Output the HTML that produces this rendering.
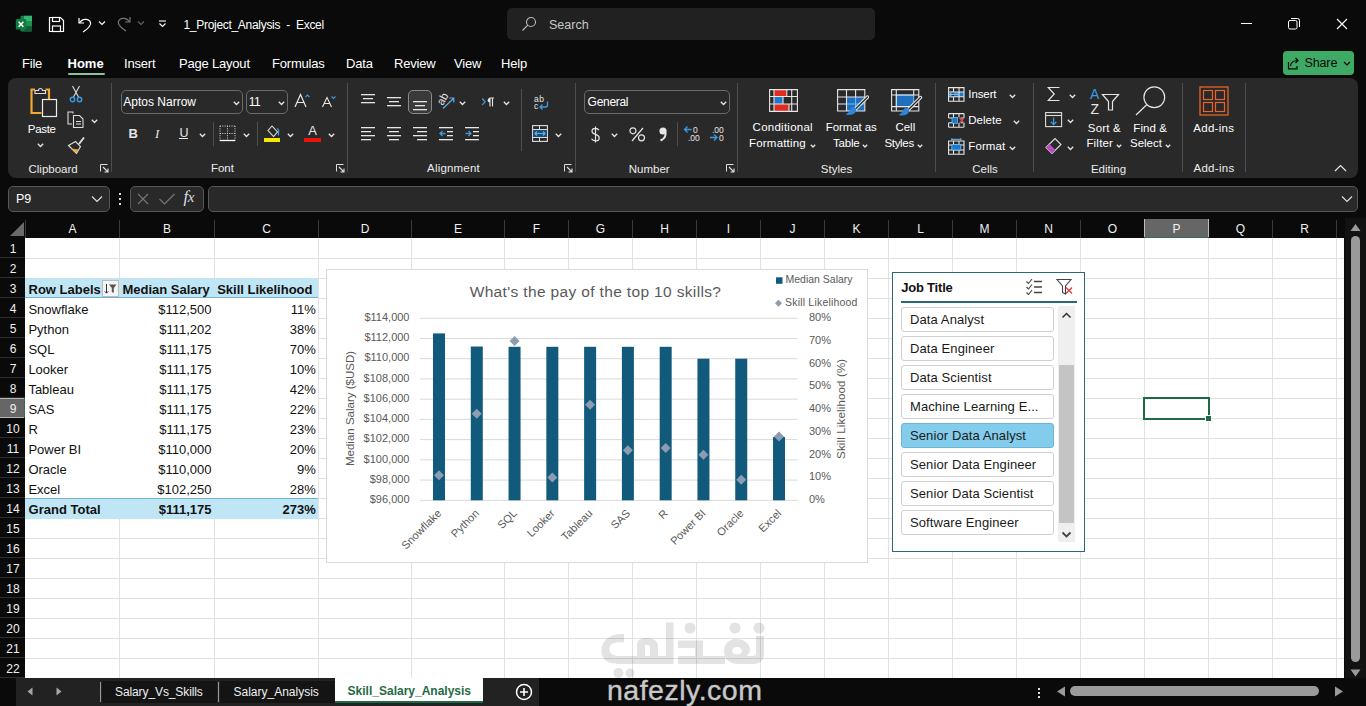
<!DOCTYPE html>
<html><head><meta charset="utf-8"><style>
*{margin:0;padding:0;box-sizing:border-box}
html,body{width:1366px;height:706px;overflow:hidden;background:#0a0a0a;font-family:"Liberation Sans", sans-serif}
.t{position:absolute;white-space:nowrap;line-height:1}
.r{position:absolute}
</style></head><body>
<svg class="r" style="left:15px;top:15px;" width="19" height="18" viewBox="0 0 19 18"><rect x="5.5" y="0.8" width="11.5" height="15.7" rx="1.2" fill="#1b7a47"/><rect x="9" y="0.8" width="8" height="5.2" fill="#35b774"/><rect x="9" y="6" width="8" height="5.2" fill="#21924f"/><rect x="9" y="11.2" width="8" height="5.3" fill="#145c36"/><rect x="0.8" y="4" width="10.5" height="10.5" rx="1.2" fill="#107c41"/><path d="M3.6 6.8l4.8 5M8.4 6.8l-4.8 5" stroke="#fff" stroke-width="1.5"/></svg><svg class="r" style="left:48px;top:16px;" width="17" height="17" viewBox="0 0 17 17"><path d="M1.5 1.5h11l3 3v11h-14z" fill="none" stroke="#fff" stroke-width="1.2"/><rect x="4.5" y="1.5" width="7" height="4" fill="none" stroke="#fff" stroke-width="1.2"/><rect x="4.5" y="10" width="8" height="5.5" fill="none" stroke="#fff" stroke-width="1.2"/></svg><svg class="r" style="left:77px;top:16px;" width="16" height="17" viewBox="0 0 16 17"><path d="M2 2v5h5" fill="none" stroke="#fff" stroke-width="1.2"/><path d="M2.5 7 C5 2.5 12 2 13.5 6.5 C14.5 9.5 12 12 6 16" fill="none" stroke="#fff" stroke-width="1.2"/></svg><svg class="r" style="left:98px;top:20px;" width="8" height="6" viewBox="0 0 8 6"><path d="M1 1.5l3 3 3-3" fill="none" stroke="#fff" stroke-width="1.1"/></svg><svg class="r" style="left:117px;top:15px;" width="15" height="17" viewBox="0 0 15 17"><path d="M13 2v5h-5" fill="none" stroke="#777" stroke-width="1.2"/><path d="M12.5 7 C10 2.5 3 2 1.5 6.5 C0.5 9.5 3 12 9 16" fill="none" stroke="#777" stroke-width="1.2"/></svg><svg class="r" style="left:137px;top:20px;" width="8" height="6" viewBox="0 0 8 6"><path d="M1 1.5l3 3 3-3" fill="none" stroke="#666" stroke-width="1.1"/></svg><svg class="r" style="left:158px;top:20px;" width="9" height="8" viewBox="0 0 9 8"><path d="M1 1h7" stroke="#fff" stroke-width="1.1"/><path d="M1.5 3.5l3 3 3-3" fill="none" stroke="#fff" stroke-width="1.1"/></svg><div class="t " style="left:183.5px;top:18.99px;font-size:12px;color:#fff;font-weight:normal;letter-spacing:-0.3px">1_Project_Analysis&nbsp;&nbsp;-&nbsp;&nbsp;Excel</div><div class="r" style="left:507px;top:8px;width:368px;height:32px;background:#212121;border-radius:5px"></div><svg class="r" style="left:521px;top:16px;" width="16" height="16" viewBox="0 0 16 16"><circle cx="10" cy="6" r="4.5" fill="none" stroke="#bbb" stroke-width="1.1"/><path d="M6.8 9.2L1.5 14.5" stroke="#bbb" stroke-width="1.2"/></svg><div class="t " style="left:549px;top:18.53px;font-size:12.5px;color:#c8c8c8;font-weight:normal;">Search</div><div class="r" style="left:1241px;top:23px;width:11px;height:1px;background:#fff;"></div><svg class="r" style="left:1288px;top:18px;" width="12" height="12" viewBox="0 0 12 12"><rect x="0.5" y="2.5" width="8.5" height="8.5" rx="1.5" fill="none" stroke="#fff" stroke-width="1"/><path d="M3 0.5h6.5a2 2 0 0 1 2 2v6.5" fill="none" stroke="#fff" stroke-width="1"/></svg><svg class="r" style="left:1336px;top:18px;" width="12" height="12" viewBox="0 0 12 12"><path d="M1 1l10 10M11 1l-10 10" stroke="#fff" stroke-width="1.1"/></svg><div class="t " style="left:22px;top:57.47px;font-size:13px;color:#fff;font-weight:normal;letter-spacing:-0.2px">File</div><div class="t " style="left:124px;top:57.47px;font-size:13px;color:#fff;font-weight:normal;letter-spacing:-0.2px">Insert</div><div class="t " style="left:179px;top:57.47px;font-size:13px;color:#fff;font-weight:normal;letter-spacing:-0.2px">Page Layout</div><div class="t " style="left:272px;top:57.47px;font-size:13px;color:#fff;font-weight:normal;letter-spacing:-0.2px">Formulas</div><div class="t " style="left:346px;top:57.47px;font-size:13px;color:#fff;font-weight:normal;letter-spacing:-0.2px">Data</div><div class="t " style="left:394px;top:57.47px;font-size:13px;color:#fff;font-weight:normal;letter-spacing:-0.2px">Review</div><div class="t " style="left:454px;top:57.47px;font-size:13px;color:#fff;font-weight:normal;letter-spacing:-0.2px">View</div><div class="t " style="left:501px;top:57.47px;font-size:13px;color:#fff;font-weight:normal;letter-spacing:-0.2px">Help</div><div class="t " style="left:67.5px;top:57.47px;font-size:13px;color:#fff;font-weight:bold;letter-spacing:0px">Home</div><div class="r" style="left:67.5px;top:73px;width:37px;height:2.2px;background:#8cc39c;border-radius:1px"></div><div class="r" style="left:1283px;top:51px;width:71px;height:24px;background:#3faa65;border-radius:4px"></div><svg class="r" style="left:1287px;top:57px;" width="14" height="13" viewBox="0 0 14 13"><path d="M1.5 5v6.8h8.5V9" fill="none" stroke="#0a0a0a" stroke-width="1.2"/><path d="M3.5 9C4 5.5 6.5 3.5 10.5 3.5M8.5 1l2.5 2.5-2.5 2.5" fill="none" stroke="#0a0a0a" stroke-width="1.2"/></svg><div class="t " style="left:1304.4px;top:57.23px;font-size:12.5px;color:#0a0a0a;font-weight:normal;letter-spacing:-0.1px">Share</div><svg class="r" style="left:1343px;top:61px;" width="8" height="6" viewBox="0 0 8 6"><path d="M1 1l3 3 3-3" fill="none" stroke="#0a0a0a" stroke-width="1.2"/></svg><div class="r" style="left:8px;top:78px;width:1350px;height:100px;background:#292929;border-radius:8px"></div><div class="r" style="left:8px;top:186px;width:102px;height:26px;background:#292929;border:1px solid #575757;border-radius:5px"></div><div class="t " style="left:16px;top:192.53px;font-size:12.5px;color:#fff;font-weight:normal;">P9</div><svg class="r" style="left:91px;top:195px;" width="12" height="8" viewBox="0 0 12 8"><path d="M1 1.5l5 5 5-5" fill="none" stroke="#ddd" stroke-width="1.2"/></svg><div class="r" style="left:119px;top:193px;width:2px;height:2px;background:#ddd;"></div><div class="r" style="left:119px;top:198px;width:2px;height:2px;background:#ddd;"></div><div class="r" style="left:119px;top:203px;width:2px;height:2px;background:#ddd;"></div><div class="r" style="left:130px;top:186px;width:74px;height:26px;background:#292929;border:1px solid #575757;border-radius:5px"></div><svg class="r" style="left:136px;top:192px;" width="14" height="14" viewBox="0 0 14 14"><path d="M2 2l10 10M12 2l-10 10" stroke="#777" stroke-width="1.1"/></svg><svg class="r" style="left:158px;top:192px;" width="18" height="14" viewBox="0 0 18 14"><path d="M1.5 7l5 5 10-10" fill="none" stroke="#777" stroke-width="1.1"/></svg><div class="t " style="left:183.5px;top:187.50px;font-size:17px;color:#ddd;font-weight:normal;font-family:&quot;Liberation Serif&quot;,serif;letter-spacing:-0.5px"><i>f</i><i style="font-size:15px">x</i></div><div class="r" style="left:208px;top:186px;width:1150px;height:26px;background:#292929;border:1px solid #575757;border-radius:5px"></div><svg class="r" style="left:1341px;top:195px;" width="12" height="8" viewBox="0 0 12 8"><path d="M1 1.5l5 5 5-5" fill="none" stroke="#ddd" stroke-width="1.2"/></svg><div class="r" style="left:25px;top:238px;width:1319px;height:440px;background:#ffffff;"></div><div class="r" style="left:119px;top:238px;width:1px;height:440px;background:#e1e1e1;"></div><div class="r" style="left:214px;top:238px;width:1px;height:440px;background:#e1e1e1;"></div><div class="r" style="left:318px;top:238px;width:1px;height:440px;background:#e1e1e1;"></div><div class="r" style="left:411px;top:238px;width:1px;height:440px;background:#e1e1e1;"></div><div class="r" style="left:504px;top:238px;width:1px;height:440px;background:#e1e1e1;"></div><div class="r" style="left:568px;top:238px;width:1px;height:440px;background:#e1e1e1;"></div><div class="r" style="left:632px;top:238px;width:1px;height:440px;background:#e1e1e1;"></div><div class="r" style="left:696px;top:238px;width:1px;height:440px;background:#e1e1e1;"></div><div class="r" style="left:760px;top:238px;width:1px;height:440px;background:#e1e1e1;"></div><div class="r" style="left:824px;top:238px;width:1px;height:440px;background:#e1e1e1;"></div><div class="r" style="left:888px;top:238px;width:1px;height:440px;background:#e1e1e1;"></div><div class="r" style="left:952px;top:238px;width:1px;height:440px;background:#e1e1e1;"></div><div class="r" style="left:1016px;top:238px;width:1px;height:440px;background:#e1e1e1;"></div><div class="r" style="left:1080px;top:238px;width:1px;height:440px;background:#e1e1e1;"></div><div class="r" style="left:1144px;top:238px;width:1px;height:440px;background:#e1e1e1;"></div><div class="r" style="left:1208px;top:238px;width:1px;height:440px;background:#e1e1e1;"></div><div class="r" style="left:1272px;top:238px;width:1px;height:440px;background:#e1e1e1;"></div><div class="r" style="left:1336px;top:238px;width:1px;height:440px;background:#e1e1e1;"></div><div class="r" style="left:25px;top:258px;width:1319px;height:1px;background:#e1e1e1;"></div><div class="r" style="left:25px;top:278px;width:1319px;height:1px;background:#e1e1e1;"></div><div class="r" style="left:25px;top:298px;width:1319px;height:1px;background:#e1e1e1;"></div><div class="r" style="left:25px;top:318px;width:1319px;height:1px;background:#e1e1e1;"></div><div class="r" style="left:25px;top:338px;width:1319px;height:1px;background:#e1e1e1;"></div><div class="r" style="left:25px;top:358px;width:1319px;height:1px;background:#e1e1e1;"></div><div class="r" style="left:25px;top:378px;width:1319px;height:1px;background:#e1e1e1;"></div><div class="r" style="left:25px;top:398px;width:1319px;height:1px;background:#e1e1e1;"></div><div class="r" style="left:25px;top:418px;width:1319px;height:1px;background:#e1e1e1;"></div><div class="r" style="left:25px;top:438px;width:1319px;height:1px;background:#e1e1e1;"></div><div class="r" style="left:25px;top:458px;width:1319px;height:1px;background:#e1e1e1;"></div><div class="r" style="left:25px;top:478px;width:1319px;height:1px;background:#e1e1e1;"></div><div class="r" style="left:25px;top:498px;width:1319px;height:1px;background:#e1e1e1;"></div><div class="r" style="left:25px;top:518px;width:1319px;height:1px;background:#e1e1e1;"></div><div class="r" style="left:25px;top:538px;width:1319px;height:1px;background:#e1e1e1;"></div><div class="r" style="left:25px;top:558px;width:1319px;height:1px;background:#e1e1e1;"></div><div class="r" style="left:25px;top:578px;width:1319px;height:1px;background:#e1e1e1;"></div><div class="r" style="left:25px;top:598px;width:1319px;height:1px;background:#e1e1e1;"></div><div class="r" style="left:25px;top:618px;width:1319px;height:1px;background:#e1e1e1;"></div><div class="r" style="left:25px;top:638px;width:1319px;height:1px;background:#e1e1e1;"></div><div class="r" style="left:25px;top:658px;width:1319px;height:1px;background:#e1e1e1;"></div><div class="r" style="left:25px;top:678px;width:1319px;height:1px;background:#e1e1e1;"></div><div class="r" style="left:0px;top:218px;width:1345px;height:20px;background:#0a0a0a;"></div><div class="r" style="left:1144px;top:219px;width:64px;height:19px;background:#666666;"></div><div class="r" style="left:1144px;top:236.5px;width:64px;height:1.5px;background:#2f7050;"></div><div class="r" style="left:119px;top:220px;width:1px;height:18px;background:#3a3a3a;"></div><div class="t " style="left:72.5px;transform:translateX(-50%);top:222.99px;font-size:12px;color:#f0f0f0;font-weight:normal;">A</div><div class="r" style="left:214px;top:220px;width:1px;height:18px;background:#3a3a3a;"></div><div class="t " style="left:167.0px;transform:translateX(-50%);top:222.99px;font-size:12px;color:#f0f0f0;font-weight:normal;">B</div><div class="r" style="left:318px;top:220px;width:1px;height:18px;background:#3a3a3a;"></div><div class="t " style="left:266.5px;transform:translateX(-50%);top:222.99px;font-size:12px;color:#f0f0f0;font-weight:normal;">C</div><div class="r" style="left:411px;top:220px;width:1px;height:18px;background:#3a3a3a;"></div><div class="t " style="left:365.0px;transform:translateX(-50%);top:222.99px;font-size:12px;color:#f0f0f0;font-weight:normal;">D</div><div class="r" style="left:504px;top:220px;width:1px;height:18px;background:#3a3a3a;"></div><div class="t " style="left:458.0px;transform:translateX(-50%);top:222.99px;font-size:12px;color:#f0f0f0;font-weight:normal;">E</div><div class="r" style="left:568px;top:220px;width:1px;height:18px;background:#3a3a3a;"></div><div class="t " style="left:536.5px;transform:translateX(-50%);top:222.99px;font-size:12px;color:#f0f0f0;font-weight:normal;">F</div><div class="r" style="left:632px;top:220px;width:1px;height:18px;background:#3a3a3a;"></div><div class="t " style="left:600.5px;transform:translateX(-50%);top:222.99px;font-size:12px;color:#f0f0f0;font-weight:normal;">G</div><div class="r" style="left:696px;top:220px;width:1px;height:18px;background:#3a3a3a;"></div><div class="t " style="left:664.5px;transform:translateX(-50%);top:222.99px;font-size:12px;color:#f0f0f0;font-weight:normal;">H</div><div class="r" style="left:760px;top:220px;width:1px;height:18px;background:#3a3a3a;"></div><div class="t " style="left:728.5px;transform:translateX(-50%);top:222.99px;font-size:12px;color:#f0f0f0;font-weight:normal;">I</div><div class="r" style="left:824px;top:220px;width:1px;height:18px;background:#3a3a3a;"></div><div class="t " style="left:792.5px;transform:translateX(-50%);top:222.99px;font-size:12px;color:#f0f0f0;font-weight:normal;">J</div><div class="r" style="left:888px;top:220px;width:1px;height:18px;background:#3a3a3a;"></div><div class="t " style="left:856.5px;transform:translateX(-50%);top:222.99px;font-size:12px;color:#f0f0f0;font-weight:normal;">K</div><div class="r" style="left:952px;top:220px;width:1px;height:18px;background:#3a3a3a;"></div><div class="t " style="left:920.5px;transform:translateX(-50%);top:222.99px;font-size:12px;color:#f0f0f0;font-weight:normal;">L</div><div class="r" style="left:1016px;top:220px;width:1px;height:18px;background:#3a3a3a;"></div><div class="t " style="left:984.5px;transform:translateX(-50%);top:222.99px;font-size:12px;color:#f0f0f0;font-weight:normal;">M</div><div class="r" style="left:1080px;top:220px;width:1px;height:18px;background:#3a3a3a;"></div><div class="t " style="left:1048.5px;transform:translateX(-50%);top:222.99px;font-size:12px;color:#f0f0f0;font-weight:normal;">N</div><div class="r" style="left:1144px;top:220px;width:1px;height:18px;background:#3a3a3a;"></div><div class="t " style="left:1112.5px;transform:translateX(-50%);top:222.99px;font-size:12px;color:#f0f0f0;font-weight:normal;">O</div><div class="r" style="left:1208px;top:220px;width:1px;height:18px;background:#3a3a3a;"></div><div class="t " style="left:1176.5px;transform:translateX(-50%);top:222.99px;font-size:12px;color:#f0f0f0;font-weight:normal;">P</div><div class="r" style="left:1272px;top:220px;width:1px;height:18px;background:#3a3a3a;"></div><div class="t " style="left:1240.5px;transform:translateX(-50%);top:222.99px;font-size:12px;color:#f0f0f0;font-weight:normal;">Q</div><div class="r" style="left:1336px;top:220px;width:1px;height:18px;background:#3a3a3a;"></div><div class="t " style="left:1304.5px;transform:translateX(-50%);top:222.99px;font-size:12px;color:#f0f0f0;font-weight:normal;">R</div><div class="r" style="left:25px;top:220px;width:1px;height:18px;background:#3a3a3a;"></div><div class="r" style="left:1144px;top:219px;width:1px;height:18px;background:#bdbdbd;"></div><div class="r" style="left:1208px;top:219px;width:1px;height:18px;background:#bdbdbd;"></div><svg class="r" style="left:8px;top:221px;" width="17" height="16" viewBox="0 0 17 16"><path d="M16 1V15H2z" fill="#6a6a6a"/></svg><div class="r" style="left:0px;top:238px;width:25px;height:440px;background:#0a0a0a;"></div><div class="r" style="left:0px;top:398px;width:25px;height:20px;background:#666666;"></div><div class="r" style="left:24px;top:398px;width:1.5px;height:20px;background:#2f7050;"></div><div class="r" style="left:0px;top:257px;width:25px;height:1px;background:#2e2e2e;"></div><div class="t " style="left:13px;transform:translateX(-50%);top:242.59px;font-size:12px;color:#f0f0f0;font-weight:normal;">1</div><div class="r" style="left:0px;top:277px;width:25px;height:1px;background:#2e2e2e;"></div><div class="t " style="left:13px;transform:translateX(-50%);top:262.59px;font-size:12px;color:#f0f0f0;font-weight:normal;">2</div><div class="r" style="left:0px;top:297px;width:25px;height:1px;background:#2e2e2e;"></div><div class="t " style="left:13px;transform:translateX(-50%);top:282.59px;font-size:12px;color:#f0f0f0;font-weight:normal;">3</div><div class="r" style="left:0px;top:317px;width:25px;height:1px;background:#2e2e2e;"></div><div class="t " style="left:13px;transform:translateX(-50%);top:302.59px;font-size:12px;color:#f0f0f0;font-weight:normal;">4</div><div class="r" style="left:0px;top:337px;width:25px;height:1px;background:#2e2e2e;"></div><div class="t " style="left:13px;transform:translateX(-50%);top:322.59px;font-size:12px;color:#f0f0f0;font-weight:normal;">5</div><div class="r" style="left:0px;top:357px;width:25px;height:1px;background:#2e2e2e;"></div><div class="t " style="left:13px;transform:translateX(-50%);top:342.59px;font-size:12px;color:#f0f0f0;font-weight:normal;">6</div><div class="r" style="left:0px;top:377px;width:25px;height:1px;background:#2e2e2e;"></div><div class="t " style="left:13px;transform:translateX(-50%);top:362.59px;font-size:12px;color:#f0f0f0;font-weight:normal;">7</div><div class="r" style="left:0px;top:397px;width:25px;height:1px;background:#2e2e2e;"></div><div class="t " style="left:13px;transform:translateX(-50%);top:382.59px;font-size:12px;color:#f0f0f0;font-weight:normal;">8</div><div class="r" style="left:0px;top:417px;width:25px;height:1px;background:#2e2e2e;"></div><div class="t " style="left:13px;transform:translateX(-50%);top:402.59px;font-size:12px;color:#f0f0f0;font-weight:normal;">9</div><div class="r" style="left:0px;top:437px;width:25px;height:1px;background:#2e2e2e;"></div><div class="t " style="left:13px;transform:translateX(-50%);top:422.59px;font-size:12px;color:#f0f0f0;font-weight:normal;">10</div><div class="r" style="left:0px;top:457px;width:25px;height:1px;background:#2e2e2e;"></div><div class="t " style="left:13px;transform:translateX(-50%);top:442.59px;font-size:12px;color:#f0f0f0;font-weight:normal;">11</div><div class="r" style="left:0px;top:477px;width:25px;height:1px;background:#2e2e2e;"></div><div class="t " style="left:13px;transform:translateX(-50%);top:462.59px;font-size:12px;color:#f0f0f0;font-weight:normal;">12</div><div class="r" style="left:0px;top:497px;width:25px;height:1px;background:#2e2e2e;"></div><div class="t " style="left:13px;transform:translateX(-50%);top:482.59px;font-size:12px;color:#f0f0f0;font-weight:normal;">13</div><div class="r" style="left:0px;top:517px;width:25px;height:1px;background:#2e2e2e;"></div><div class="t " style="left:13px;transform:translateX(-50%);top:502.59px;font-size:12px;color:#f0f0f0;font-weight:normal;">14</div><div class="r" style="left:0px;top:537px;width:25px;height:1px;background:#2e2e2e;"></div><div class="t " style="left:13px;transform:translateX(-50%);top:522.59px;font-size:12px;color:#f0f0f0;font-weight:normal;">15</div><div class="r" style="left:0px;top:557px;width:25px;height:1px;background:#2e2e2e;"></div><div class="t " style="left:13px;transform:translateX(-50%);top:542.59px;font-size:12px;color:#f0f0f0;font-weight:normal;">16</div><div class="r" style="left:0px;top:577px;width:25px;height:1px;background:#2e2e2e;"></div><div class="t " style="left:13px;transform:translateX(-50%);top:562.59px;font-size:12px;color:#f0f0f0;font-weight:normal;">17</div><div class="r" style="left:0px;top:597px;width:25px;height:1px;background:#2e2e2e;"></div><div class="t " style="left:13px;transform:translateX(-50%);top:582.59px;font-size:12px;color:#f0f0f0;font-weight:normal;">18</div><div class="r" style="left:0px;top:617px;width:25px;height:1px;background:#2e2e2e;"></div><div class="t " style="left:13px;transform:translateX(-50%);top:602.59px;font-size:12px;color:#f0f0f0;font-weight:normal;">19</div><div class="r" style="left:0px;top:637px;width:25px;height:1px;background:#2e2e2e;"></div><div class="t " style="left:13px;transform:translateX(-50%);top:622.59px;font-size:12px;color:#f0f0f0;font-weight:normal;">20</div><div class="r" style="left:0px;top:657px;width:25px;height:1px;background:#2e2e2e;"></div><div class="t " style="left:13px;transform:translateX(-50%);top:642.59px;font-size:12px;color:#f0f0f0;font-weight:normal;">21</div><div class="r" style="left:0px;top:677px;width:25px;height:1px;background:#2e2e2e;"></div><div class="t " style="left:13px;transform:translateX(-50%);top:662.59px;font-size:12px;color:#f0f0f0;font-weight:normal;">22</div><div class="r" style="left:0px;top:398px;width:24px;height:1px;background:#b5b5b5;"></div><div class="r" style="left:0px;top:417px;width:24px;height:1px;background:#b5b5b5;"></div><div class="r" style="left:1143px;top:397px;width:67px;height:23px;border:2px solid #1e6b43"></div><div class="r" style="left:1206px;top:416px;width:5px;height:5px;background:#1e6b43;outline:1px solid #fff"></div><div class="r" style="left:1345px;top:218px;width:21px;height:460px;background:#121212;"></div><svg class="r" style="left:1350px;top:223px;" width="11" height="9" viewBox="0 0 11 9"><path d="M5.5 1L10.5 8H0.5z" fill="#9a9a9a"/></svg><div class="r" style="left:1351px;top:236px;width:9px;height:426px;background:#9a9a9a;border-radius:5px"></div><svg class="r" style="left:1350px;top:669px;" width="11" height="8" viewBox="0 0 11 8"><path d="M0.5 0.5H10.5L5.5 7.5z" fill="#9a9a9a"/></svg><div class="r" style="left:0px;top:678px;width:1366px;height:28px;background:#0a0a0a;"></div><div class="r" style="left:16px;top:678px;width:523px;height:28px;background:#222222;"></div><svg class="r" style="left:27px;top:687px;" width="7" height="10" viewBox="0 0 7 10"><path d="M5.5 0.5L0.5 4.5l5 4z" fill="#a5a5a5"/></svg><svg class="r" style="left:55.5px;top:687px;" width="7" height="10" viewBox="0 0 7 10"><path d="M0.5 0.5l5 4-5 4z" fill="#a5a5a5"/></svg><div class="r" style="left:100px;top:682px;width:1px;height:20px;background:#9a9a9a;"></div><div class="r" style="left:102px;top:681px;width:115px;height:22px;background:#141414;"></div><div class="t " style="left:115px;top:685.99px;font-size:12px;color:#f0f0f0;font-weight:normal;letter-spacing:-0.1px">Salary_Vs_Skills</div><div class="r" style="left:218px;top:682px;width:1px;height:20px;background:#9a9a9a;"></div><div class="r" style="left:220px;top:681px;width:115px;height:22px;background:#141414;"></div><div class="t " style="left:233.5px;top:685.99px;font-size:12px;color:#f0f0f0;font-weight:normal;letter-spacing:0px">Salary_Analysis</div><div class="r" style="left:335px;top:678px;width:148px;height:25px;background:#ffffff;"></div><div class="r" style="left:335px;top:701px;width:148px;height:2px;background:#1e6b43;"></div><div class="t " style="left:347.6px;top:684.89px;font-size:12px;color:#1e6b43;font-weight:bold;letter-spacing:0px">Skill_Salary_Analysis</div><svg class="r" style="left:515px;top:683px;" width="18" height="18" viewBox="0 0 18 18"><circle cx="9" cy="9" r="7.5" fill="none" stroke="#fff" stroke-width="1.5"/><path d="M9 5v8M5 9h8" stroke="#fff" stroke-width="1.6"/></svg><div class="r" style="left:1038px;top:688px;width:2px;height:2px;background:#ddd;"></div><div class="r" style="left:1038px;top:692px;width:2px;height:2px;background:#ddd;"></div><div class="r" style="left:1038px;top:696px;width:2px;height:2px;background:#ddd;"></div><svg class="r" style="left:1056px;top:686px;" width="10" height="11" viewBox="0 0 10 11"><path d="M9 0.5V10.5L1 5.5z" fill="#9a9a9a"/></svg><div class="r" style="left:1070px;top:686px;width:249px;height:10px;background:#9a9a9a;border-radius:5px"></div><svg class="r" style="left:1334px;top:686px;" width="10" height="11" viewBox="0 0 10 11"><path d="M1 0.5V10.5L9 5.5z" fill="#9a9a9a"/></svg><div class="r" style="left:25px;top:278px;width:293px;height:240px;background:#ffffff;"></div><div class="r" style="left:25px;top:278px;width:293px;height:20px;background:#c0e6f5;"></div><div class="r" style="left:25px;top:297px;width:293px;height:1px;background:#6fb3d9;"></div><div class="r" style="left:25px;top:498px;width:293px;height:21px;background:#c0e6f5;"></div><div class="r" style="left:25px;top:498px;width:293px;height:1px;background:#6fb3d9;"></div><div class="t " style="left:28.5px;top:282.87px;font-size:13px;color:#111111;font-weight:bold;">Row Labels</div><div class="r" style="left:102px;top:280px;width:17px;height:17px;background:#f4f4f4;border:1px solid #bcbcbc"></div><svg class="r" style="left:103px;top:281px;" width="15" height="15" viewBox="0 0 15 15"><path d="M3.5 3v9M1.8 10.3l1.7 1.9 1.7-1.9" fill="none" stroke="#333" stroke-width="1"/><path d="M6 3.5h7.5l-2.7 3.6v5l-2-1v-4z" fill="#555"/></svg><div class="t " style="left:122.4px;top:282.87px;font-size:13px;color:#111111;font-weight:bold;">Median Salary</div><div class="t " style="right:1053.5px;top:282.87px;font-size:13px;color:#111111;font-weight:bold;">Skill Likelihood</div><div class="t " style="left:28.4px;top:302.77px;font-size:13px;color:#111111;font-weight:normal;">Snowflake</div><div class="t " style="right:1154.5px;top:302.77px;font-size:13px;color:#111111;font-weight:normal;">$112,500</div><div class="t " style="right:1050.2px;top:302.77px;font-size:13px;color:#111111;font-weight:normal;">11%</div><div class="t " style="left:28.4px;top:322.77px;font-size:13px;color:#111111;font-weight:normal;">Python</div><div class="t " style="right:1154.5px;top:322.77px;font-size:13px;color:#111111;font-weight:normal;">$111,202</div><div class="t " style="right:1050.2px;top:322.77px;font-size:13px;color:#111111;font-weight:normal;">38%</div><div class="t " style="left:28.4px;top:342.77px;font-size:13px;color:#111111;font-weight:normal;">SQL</div><div class="t " style="right:1154.5px;top:342.77px;font-size:13px;color:#111111;font-weight:normal;">$111,175</div><div class="t " style="right:1050.2px;top:342.77px;font-size:13px;color:#111111;font-weight:normal;">70%</div><div class="t " style="left:28.4px;top:362.77px;font-size:13px;color:#111111;font-weight:normal;">Looker</div><div class="t " style="right:1154.5px;top:362.77px;font-size:13px;color:#111111;font-weight:normal;">$111,175</div><div class="t " style="right:1050.2px;top:362.77px;font-size:13px;color:#111111;font-weight:normal;">10%</div><div class="t " style="left:28.4px;top:382.77px;font-size:13px;color:#111111;font-weight:normal;">Tableau</div><div class="t " style="right:1154.5px;top:382.77px;font-size:13px;color:#111111;font-weight:normal;">$111,175</div><div class="t " style="right:1050.2px;top:382.77px;font-size:13px;color:#111111;font-weight:normal;">42%</div><div class="t " style="left:28.4px;top:402.77px;font-size:13px;color:#111111;font-weight:normal;">SAS</div><div class="t " style="right:1154.5px;top:402.77px;font-size:13px;color:#111111;font-weight:normal;">$111,175</div><div class="t " style="right:1050.2px;top:402.77px;font-size:13px;color:#111111;font-weight:normal;">22%</div><div class="t " style="left:28.4px;top:422.77px;font-size:13px;color:#111111;font-weight:normal;">R</div><div class="t " style="right:1154.5px;top:422.77px;font-size:13px;color:#111111;font-weight:normal;">$111,175</div><div class="t " style="right:1050.2px;top:422.77px;font-size:13px;color:#111111;font-weight:normal;">23%</div><div class="t " style="left:28.4px;top:442.77px;font-size:13px;color:#111111;font-weight:normal;">Power BI</div><div class="t " style="right:1154.5px;top:442.77px;font-size:13px;color:#111111;font-weight:normal;">$110,000</div><div class="t " style="right:1050.2px;top:442.77px;font-size:13px;color:#111111;font-weight:normal;">20%</div><div class="t " style="left:28.4px;top:462.77px;font-size:13px;color:#111111;font-weight:normal;">Oracle</div><div class="t " style="right:1154.5px;top:462.77px;font-size:13px;color:#111111;font-weight:normal;">$110,000</div><div class="t " style="right:1050.2px;top:462.77px;font-size:13px;color:#111111;font-weight:normal;">9%</div><div class="t " style="left:28.4px;top:482.77px;font-size:13px;color:#111111;font-weight:normal;">Excel</div><div class="t " style="right:1154.5px;top:482.77px;font-size:13px;color:#111111;font-weight:normal;">$102,250</div><div class="t " style="right:1050.2px;top:482.77px;font-size:13px;color:#111111;font-weight:normal;">28%</div><div class="t " style="left:28.6px;top:502.97px;font-size:13px;color:#111111;font-weight:bold;">Grand Total</div><div class="t " style="right:1154.5px;top:502.97px;font-size:13px;color:#111111;font-weight:bold;">$111,175</div><div class="t " style="right:1050.2px;top:502.97px;font-size:13px;color:#111111;font-weight:bold;">273%</div><svg class="r" style="left:326px;top:269px" width="542" height="294" viewBox="0 0 542 294"><rect x="0.5" y="0.5" width="541" height="293" fill="#fff" stroke="#d9d9d9" stroke-width="1"/><rect x="94" y="230.80" width="377.5" height="1" fill="#d9d9d9"/><text x="83.5" y="234.10" font-size="11" fill="#595959" text-anchor="end">$96,000</text><rect x="94" y="210.57" width="377.5" height="1" fill="#d9d9d9"/><text x="83.5" y="213.87" font-size="11" fill="#595959" text-anchor="end">$98,000</text><rect x="94" y="190.34" width="377.5" height="1" fill="#d9d9d9"/><text x="83.5" y="193.64" font-size="11" fill="#595959" text-anchor="end">$100,000</text><rect x="94" y="170.11" width="377.5" height="1" fill="#d9d9d9"/><text x="83.5" y="173.41" font-size="11" fill="#595959" text-anchor="end">$102,000</text><rect x="94" y="149.88" width="377.5" height="1" fill="#d9d9d9"/><text x="83.5" y="153.18" font-size="11" fill="#595959" text-anchor="end">$104,000</text><rect x="94" y="129.65" width="377.5" height="1" fill="#d9d9d9"/><text x="83.5" y="132.95" font-size="11" fill="#595959" text-anchor="end">$106,000</text><rect x="94" y="109.42" width="377.5" height="1" fill="#d9d9d9"/><text x="83.5" y="112.72" font-size="11" fill="#595959" text-anchor="end">$108,000</text><rect x="94" y="89.19" width="377.5" height="1" fill="#d9d9d9"/><text x="83.5" y="92.49" font-size="11" fill="#595959" text-anchor="end">$110,000</text><rect x="94" y="68.96" width="377.5" height="1" fill="#d9d9d9"/><text x="83.5" y="72.26" font-size="11" fill="#595959" text-anchor="end">$112,000</text><rect x="94" y="48.73" width="377.5" height="1" fill="#d9d9d9"/><text x="83.5" y="52.03" font-size="11" fill="#595959" text-anchor="end">$114,000</text><text x="483" y="234.10" font-size="11" fill="#595959">0%</text><text x="483" y="211.34" font-size="11" fill="#595959">10%</text><text x="483" y="188.58" font-size="11" fill="#595959">20%</text><text x="483" y="165.82" font-size="11" fill="#595959">30%</text><text x="483" y="143.06" font-size="11" fill="#595959">40%</text><text x="483" y="120.30" font-size="11" fill="#595959">50%</text><text x="483" y="97.54" font-size="11" fill="#595959">60%</text><text x="483" y="74.78" font-size="11" fill="#595959">70%</text><text x="483" y="52.02" font-size="11" fill="#595959">80%</text><rect x="107.00" y="64.40" width="12" height="166.90" fill="#115a7b"/><rect x="144.78" y="77.53" width="12" height="153.77" fill="#115a7b"/><rect x="182.56" y="77.80" width="12" height="153.50" fill="#115a7b"/><rect x="220.34" y="77.80" width="12" height="153.50" fill="#115a7b"/><rect x="258.12" y="77.80" width="12" height="153.50" fill="#115a7b"/><rect x="295.90" y="77.80" width="12" height="153.50" fill="#115a7b"/><rect x="333.68" y="77.80" width="12" height="153.50" fill="#115a7b"/><rect x="371.46" y="89.69" width="12" height="141.61" fill="#115a7b"/><rect x="409.24" y="89.69" width="12" height="141.61" fill="#115a7b"/><rect x="447.02" y="168.08" width="12" height="63.22" fill="#115a7b"/><path d="M113.00 201.26l5 5-5 5-5-5z" fill="#8c9db1"/><text x="116.00" y="245" font-size="11" fill="#595959" text-anchor="end" transform="rotate(-45 116.00 245)">Snowflake</text><path d="M150.78 139.81l5 5-5 5-5-5z" fill="#8c9db1"/><text x="153.78" y="245" font-size="11" fill="#595959" text-anchor="end" transform="rotate(-45 153.78 245)">Python</text><path d="M188.56 66.98l5 5-5 5-5-5z" fill="#8c9db1"/><text x="191.56" y="245" font-size="11" fill="#595959" text-anchor="end" transform="rotate(-45 191.56 245)">SQL</text><path d="M226.34 203.54l5 5-5 5-5-5z" fill="#8c9db1"/><text x="229.34" y="245" font-size="11" fill="#595959" text-anchor="end" transform="rotate(-45 229.34 245)">Looker</text><path d="M264.12 130.71l5 5-5 5-5-5z" fill="#8c9db1"/><text x="267.12" y="245" font-size="11" fill="#595959" text-anchor="end" transform="rotate(-45 267.12 245)">Tableau</text><path d="M301.90 176.23l5 5-5 5-5-5z" fill="#8c9db1"/><text x="304.90" y="245" font-size="11" fill="#595959" text-anchor="end" transform="rotate(-45 304.90 245)">SAS</text><path d="M339.68 173.95l5 5-5 5-5-5z" fill="#8c9db1"/><text x="342.68" y="245" font-size="11" fill="#595959" text-anchor="end" transform="rotate(-45 342.68 245)">R</text><path d="M377.46 180.78l5 5-5 5-5-5z" fill="#8c9db1"/><text x="380.46" y="245" font-size="11" fill="#595959" text-anchor="end" transform="rotate(-45 380.46 245)">Power BI</text><path d="M415.24 205.82l5 5-5 5-5-5z" fill="#8c9db1"/><text x="418.24" y="245" font-size="11" fill="#595959" text-anchor="end" transform="rotate(-45 418.24 245)">Oracle</text><path d="M453.02 162.57l5 5-5 5-5-5z" fill="#8c9db1"/><text x="456.02" y="245" font-size="11" fill="#595959" text-anchor="end" transform="rotate(-45 456.02 245)">Excel</text><text x="269.5" y="27.899999999999977" font-size="15.5" fill="#595959" text-anchor="middle" letter-spacing="0.35">What's the pay of the top 10 skills?</text><rect x="450" y="8.300000000000011" width="6.5" height="6.5" fill="#115a7b"/><text x="459.5" y="14.199999999999989" font-size="10.5" fill="#595959">Median Salary</text><path d="M452.5 30.80000000000001l3.5 3.5-3.5 3.5-3.5-3.5z" fill="#8c9db1"/><text x="459" y="36.80000000000001" font-size="10.5" fill="#595959" letter-spacing="0.2">Skill Likelihood</text><text x="0" y="0" font-size="11.5" fill="#595959" text-anchor="middle" transform="translate(27.80000000000001 139.5) rotate(-90)">Median Salary ($USD)</text><text x="0" y="0" font-size="11.5" fill="#595959" text-anchor="middle" letter-spacing="0.15" transform="translate(519.3 139.8) rotate(-90)">Skill Likelihood (%)</text></svg><div class="r" style="left:892px;top:272px;width:193px;height:280px;background:#ffffff;border:1px solid #2b6878"></div><div class="t " style="left:901.2px;top:280.77px;font-size:13px;color:#111;font-weight:bold;letter-spacing:-0.2px">Job Title</div><div class="r" style="left:901px;top:301px;width:176px;height:2px;background:#2b6878;"></div><svg class="r" style="left:1025px;top:278px;" width="18" height="17" viewBox="0 0 18 17"><path d="M1.5 3.5l2 2 3.5-4.5M1.5 9l2 2 3.5-4.5M1.5 14.5l2 2 3.5-4.5" fill="none" stroke="#444" stroke-width="1.1"/><path d="M9 3.5h8M9 9h8M9 14.5h8" stroke="#444" stroke-width="1.3"/></svg><svg class="r" style="left:1056px;top:278px;" width="18" height="17" viewBox="0 0 18 17"><path d="M1 1.5h14l-5.5 6.5v8l-3-1.5v-6.5z" fill="none" stroke="#444" stroke-width="1.1"/><path d="M10 9.5l6 6M16 9.5l-6 6" stroke="#e03a3a" stroke-width="1.3"/></svg><div class="r" style="left:901px;top:306.5px;width:153px;height:25px;background:#ffffff;border:1px solid #d0d0d0;border-radius:3px"></div><div class="t " style="left:910px;top:312.97px;font-size:13px;color:#1a1a1a;font-weight:normal;letter-spacing:0.1px">Data Analyst</div><div class="r" style="left:901px;top:335.5px;width:153px;height:25px;background:#ffffff;border:1px solid #d0d0d0;border-radius:3px"></div><div class="t " style="left:910px;top:341.97px;font-size:13px;color:#1a1a1a;font-weight:normal;letter-spacing:0.1px">Data Engineer</div><div class="r" style="left:901px;top:364.5px;width:153px;height:25px;background:#ffffff;border:1px solid #d0d0d0;border-radius:3px"></div><div class="t " style="left:910px;top:370.97px;font-size:13px;color:#1a1a1a;font-weight:normal;letter-spacing:0.1px">Data Scientist</div><div class="r" style="left:901px;top:393.5px;width:153px;height:25px;background:#ffffff;border:1px solid #d0d0d0;border-radius:3px"></div><div class="t " style="left:910px;top:399.97px;font-size:13px;color:#1a1a1a;font-weight:normal;letter-spacing:0.1px">Machine Learning E...</div><div class="r" style="left:901px;top:422.5px;width:153px;height:25px;background:#83cceb;border:1px solid #6cb5d6;border-radius:3px"></div><div class="t " style="left:910px;top:428.97px;font-size:13px;color:#1a1a1a;font-weight:normal;letter-spacing:0.1px">Senior Data Analyst</div><div class="r" style="left:901px;top:451.5px;width:153px;height:25px;background:#ffffff;border:1px solid #d0d0d0;border-radius:3px"></div><div class="t " style="left:910px;top:457.97px;font-size:13px;color:#1a1a1a;font-weight:normal;letter-spacing:0.1px">Senior Data Engineer</div><div class="r" style="left:901px;top:480.5px;width:153px;height:25px;background:#ffffff;border:1px solid #d0d0d0;border-radius:3px"></div><div class="t " style="left:910px;top:486.97px;font-size:13px;color:#1a1a1a;font-weight:normal;letter-spacing:0.1px">Senior Data Scientist</div><div class="r" style="left:901px;top:509.5px;width:153px;height:25px;background:#ffffff;border:1px solid #d0d0d0;border-radius:3px"></div><div class="t " style="left:910px;top:515.97px;font-size:13px;color:#1a1a1a;font-weight:normal;letter-spacing:0.1px">Software Engineer</div><div class="r" style="left:1058px;top:306px;width:17px;height:236px;background:#efefef;"></div><div class="r" style="left:1059px;top:365px;width:15px;height:158px;background:#c4c4c4;"></div><svg class="r" style="left:1061px;top:311px;" width="11" height="8" viewBox="0 0 11 8"><path d="M1.5 6.5l4-4 4 4" fill="none" stroke="#333" stroke-width="1.5"/></svg><svg class="r" style="left:1061px;top:530.5px;" width="11" height="8" viewBox="0 0 11 8"><path d="M1.5 1.5l4 4 4-4" fill="none" stroke="#444" stroke-width="1.8"/></svg><div class="r" style="left:111px;top:83px;width:1px;height:89px;background:#4e4e4e;"></div><div class="r" style="left:347px;top:83px;width:1px;height:89px;background:#4e4e4e;"></div><div class="r" style="left:575px;top:83px;width:1px;height:89px;background:#4e4e4e;"></div><div class="r" style="left:737px;top:83px;width:1px;height:89px;background:#4e4e4e;"></div><div class="r" style="left:935px;top:83px;width:1px;height:89px;background:#4e4e4e;"></div><div class="r" style="left:1033px;top:83px;width:1px;height:89px;background:#4e4e4e;"></div><div class="r" style="left:1182px;top:83px;width:1px;height:89px;background:#4e4e4e;"></div><div class="r" style="left:1245px;top:83px;width:1px;height:89px;background:#4e4e4e;"></div><svg class="r" style="left:29px;top:86px;" width="29" height="32" viewBox="0 0 29 32"><path d="M6 3.5H2.5V27h10" fill="none" stroke="#f0a830" stroke-width="2.2"/><path d="M16.5 3.5H20V13" fill="none" stroke="#f0a830" stroke-width="2.2"/><path d="M6 7.5h10.5V4.5h-3a2 2 0 0 0-4 0h-3.5z" fill="#292929" stroke="#ddd" stroke-width="1.2"/><rect x="13.5" y="13.5" width="14" height="17" fill="#292929" stroke="#eee" stroke-width="1.2"/></svg><div class="t " style="left:27.8px;top:124.15px;font-size:11.5px;color:#ffffff;font-weight:normal;letter-spacing:-0.3px">Paste</div><svg class="r" style="left:37px;top:143px;" width="7" height="5" viewBox="0 0 7 5"><path d="M0.8 0.8l2.70 2.70 2.70 -2.70" fill="none" stroke="#e6e6e6" stroke-width="1.3"/></svg><svg class="r" style="left:69px;top:85px;" width="14" height="18" viewBox="0 0 14 18"><path d="M3.5 1l6 11M10.5 1l-6 11" stroke="#ddd" stroke-width="1.1"/><circle cx="3.5" cy="14.5" r="2.2" fill="none" stroke="#3d9ae0" stroke-width="1.4"/><circle cx="10.5" cy="14.5" r="2.2" fill="none" stroke="#3d9ae0" stroke-width="1.4"/></svg><svg class="r" style="left:67px;top:111px;" width="18" height="17" viewBox="0 0 18 17"><path d="M6 2.5V1H1v12h4" fill="none" stroke="#ddd" stroke-width="1.1"/><path d="M6.5 4.5h6l3.5 3.5v8.5H6.5z" fill="none" stroke="#ddd" stroke-width="1.1"/><path d="M9 10.5h5M9 13h5" stroke="#ddd" stroke-width="1"/></svg><svg class="r" style="left:91px;top:119px;" width="7" height="5" viewBox="0 0 7 5"><path d="M0.8 0.8l2.70 2.70 2.70 -2.70" fill="none" stroke="#e6e6e6" stroke-width="1.3"/></svg><svg class="r" style="left:67px;top:136px;" width="19" height="18" viewBox="0 0 19 18"><path d="M12 8l5-6.5" stroke="#ddd" stroke-width="2"/><path d="M1.5 9.5l7-4 5 5-4 7z" fill="#292929" stroke="#ddd" stroke-width="1.1"/><path d="M4 12.5l5.5 4.5 2-3.5z" fill="#f0a830"/></svg><div class="t " style="left:28.5px;top:163.65px;font-size:11.5px;color:#ececec;font-weight:normal;">Clipboard</div><svg class="r" style="left:100px;top:164px;" width="9" height="9" viewBox="0 0 9 9"><path d="M0.5 7.5V0.5h7" fill="none" stroke="#ddd" stroke-width="1"/><path d="M3 3l5 5M4.5 8h3.5V4.5" fill="none" stroke="#ddd" stroke-width="1.1"/></svg><div class="r" style="left:120.5px;top:90px;width:122px;height:24px;border:1px solid #6a6a6a;border-radius:5px"></div><div class="t " style="left:123.3px;top:95.89px;font-size:12px;color:#ffffff;font-weight:normal;">Aptos Narrow</div><svg class="r" style="left:233px;top:101px;" width="7" height="5" viewBox="0 0 7 5"><path d="M0.8 0.8l2.70 2.70 2.70 -2.70" fill="none" stroke="#e6e6e6" stroke-width="1.3"/></svg><div class="r" style="left:245.5px;top:90px;width:42px;height:24px;border:1px solid #6a6a6a;border-radius:5px"></div><div class="t " style="left:248.8px;top:95.89px;font-size:12px;color:#ffffff;font-weight:normal;letter-spacing:-0.5px">11</div><svg class="r" style="left:278px;top:101px;" width="7" height="5" viewBox="0 0 7 5"><path d="M0.8 0.8l2.70 2.70 2.70 -2.70" fill="none" stroke="#e6e6e6" stroke-width="1.3"/></svg><svg class="r" style="left:294px;top:93px;" width="17" height="15" viewBox="0 0 17 15"><path d="M1 14L6.5 1.5 12 14M3 9.5h7" fill="none" stroke="#e6e6e6" stroke-width="1.2"/><path d="M11.5 4l2-2 2 2" fill="none" stroke="#3d9ae0" stroke-width="1.1"/></svg><svg class="r" style="left:321px;top:95px;" width="17" height="13" viewBox="0 0 17 13"><path d="M1.5 12L6 2.5 10.5 12M3 8.5h6" fill="none" stroke="#e6e6e6" stroke-width="1.1"/><path d="M10.5 1.5l2 2 2-2" fill="none" stroke="#3d9ae0" stroke-width="1.1"/></svg><div class="t " style="left:128.4px;top:126.97px;font-size:13px;color:#e6e6e6;font-weight:bold;">B</div><div class="t " style="left:155px;top:126.97px;font-size:13px;color:#e6e6e6;font-weight:normal;font-family:&quot;Liberation Serif&quot;,serif"><i>I</i></div><div class="t " style="left:179.5px;top:126.83px;font-size:12.5px;color:#e6e6e6;font-weight:normal;">U</div><div class="r" style="left:179px;top:138px;width:9px;height:1.3px;background:#e6e6e6;"></div><svg class="r" style="left:199px;top:133px;" width="7" height="5" viewBox="0 0 7 5"><path d="M0.8 0.8l2.70 2.70 2.70 -2.70" fill="none" stroke="#e6e6e6" stroke-width="1.3"/></svg><div class="r" style="left:213px;top:122px;width:1px;height:24px;background:#4e4e4e;"></div><svg class="r" style="left:219px;top:125px;" width="17" height="17" viewBox="0 0 17 17"><path d="M1 1h15M1 8.5h15M1 1v15M8.5 1v15M16 1v15" fill="none" stroke="#ddd" stroke-width="1" stroke-dasharray="1 1.3"/><path d="M1 15.5h15" stroke="#fff" stroke-width="1.3"/></svg><svg class="r" style="left:243px;top:133px;" width="7" height="5" viewBox="0 0 7 5"><path d="M0.8 0.8l2.70 2.70 2.70 -2.70" fill="none" stroke="#e6e6e6" stroke-width="1.3"/></svg><div class="r" style="left:257px;top:122px;width:1px;height:24px;background:#4e4e4e;"></div><svg class="r" style="left:264px;top:124px;" width="18" height="19" viewBox="0 0 18 19"><path d="M4 6.5l4-4.5 5.5 6-4 4.5z" fill="none" stroke="#e6e6e6" stroke-width="1.1"/><path d="M13 4.5a3 3 0 0 1 1.5 4v3" fill="none" stroke="#3d9ae0" stroke-width="1.2"/></svg><div class="r" style="left:264px;top:138px;width:16px;height:4px;background:#f4e900;"></div><svg class="r" style="left:287px;top:133px;" width="7" height="5" viewBox="0 0 7 5"><path d="M0.8 0.8l2.70 2.70 2.70 -2.70" fill="none" stroke="#e6e6e6" stroke-width="1.3"/></svg><div class="t " style="left:308.3px;top:124.47px;font-size:13px;color:#e6e6e6;font-weight:normal;letter-spacing:0">A</div><div class="r" style="left:304.3px;top:138px;width:17px;height:4px;background:#e8140e;"></div><svg class="r" style="left:328px;top:133px;" width="7" height="5" viewBox="0 0 7 5"><path d="M0.8 0.8l2.70 2.70 2.70 -2.70" fill="none" stroke="#e6e6e6" stroke-width="1.3"/></svg><div class="t " style="left:210.9px;top:163.25px;font-size:11.5px;color:#ececec;font-weight:normal;">Font</div><svg class="r" style="left:336px;top:164px;" width="9" height="9" viewBox="0 0 9 9"><path d="M0.5 7.5V0.5h7" fill="none" stroke="#ddd" stroke-width="1"/><path d="M3 3l5 5M4.5 8h3.5V4.5" fill="none" stroke="#ddd" stroke-width="1.1"/></svg><svg class="r" style="left:361px;top:94px;" width="16" height="16" viewBox="0 0 16 16"><rect x="0" y="0" width="14" height="1.3" fill="#e6e6e6"/><rect x="2" y="4" width="10" height="1.3" fill="#e6e6e6"/><rect x="0" y="8" width="14" height="1.3" fill="#e6e6e6"/></svg><svg class="r" style="left:387px;top:97px;" width="16" height="16" viewBox="0 0 16 16"><rect x="0" y="0" width="14" height="1.3" fill="#e6e6e6"/><rect x="2" y="4" width="10" height="1.3" fill="#e6e6e6"/><rect x="0" y="8" width="14" height="1.3" fill="#e6e6e6"/></svg><div class="r" style="left:408px;top:90px;width:24px;height:24px;background:#3a3a3a;border:1px solid #8a8a8a;border-radius:5px"></div><svg class="r" style="left:412.5px;top:101px;" width="16" height="16" viewBox="0 0 16 16"><rect x="0" y="0" width="14" height="1.3" fill="#e6e6e6"/><rect x="2" y="4" width="10" height="1.3" fill="#e6e6e6"/><rect x="0" y="8" width="14" height="1.3" fill="#e6e6e6"/></svg><svg class="r" style="left:436px;top:92px;" width="20" height="19" viewBox="0 0 20 19"><text x="0" y="0" font-size="11" fill="#e6e6e6" font-family="Liberation Sans" transform="translate(6.8 14) rotate(-60)">ab</text><path d="M7 16.5L17.5 6.5M13.2 6h4.6v4.6" fill="none" stroke="#5aaee8" stroke-width="1.2"/></svg><svg class="r" style="left:459px;top:101px;" width="7" height="5" viewBox="0 0 7 5"><path d="M0.8 0.8l2.70 2.70 2.70 -2.70" fill="none" stroke="#e6e6e6" stroke-width="1.3"/></svg><svg class="r" style="left:481px;top:97px;" width="14" height="10" viewBox="0 0 14 10"><path d="M1.2 1.5l3 3.2-3 3.2" fill="none" stroke="#3d9ae0" stroke-width="1.3"/><path d="M8.5 1h4.5M9 1v8.5M11.5 1v8.5" stroke="#e6e6e6" stroke-width="1.1"/><path d="M9 1a2.3 2.3 0 0 0 0 4.6z" fill="#e6e6e6"/></svg><svg class="r" style="left:503px;top:101px;" width="7" height="5" viewBox="0 0 7 5"><path d="M0.8 0.8l2.70 2.70 2.70 -2.70" fill="none" stroke="#e6e6e6" stroke-width="1.3"/></svg><svg class="r" style="left:361px;top:127px;" width="16" height="16" viewBox="0 0 16 16"><rect x="0" y="0" width="14" height="1.3" fill="#e6e6e6"/><rect x="0" y="4" width="10" height="1.3" fill="#e6e6e6"/><rect x="0" y="8" width="14" height="1.3" fill="#e6e6e6"/><rect x="0" y="12" width="10" height="1.3" fill="#e6e6e6"/></svg><svg class="r" style="left:387px;top:127px;" width="16" height="16" viewBox="0 0 16 16"><rect x="0" y="0" width="14" height="1.3" fill="#e6e6e6"/><rect x="2" y="4" width="10" height="1.3" fill="#e6e6e6"/><rect x="0" y="8" width="14" height="1.3" fill="#e6e6e6"/><rect x="2" y="12" width="10" height="1.3" fill="#e6e6e6"/></svg><svg class="r" style="left:412.5px;top:127px;" width="16" height="16" viewBox="0 0 16 16"><rect x="0" y="0" width="14" height="1.3" fill="#e6e6e6"/><rect x="4" y="4" width="10" height="1.3" fill="#e6e6e6"/><rect x="0" y="8" width="14" height="1.3" fill="#e6e6e6"/><rect x="4" y="12" width="10" height="1.3" fill="#e6e6e6"/></svg><svg class="r" style="left:439px;top:127px;" width="15" height="14" viewBox="0 0 15 14"><rect x="0" y="0" width="14" height="1.3" fill="#e6e6e6"/><rect x="8" y="4" width="6" height="1.3" fill="#e6e6e6"/><rect x="8" y="8" width="6" height="1.3" fill="#e6e6e6"/><rect x="0" y="12" width="14" height="1.3" fill="#e6e6e6"/><path d="M6.5 6.5H1M3.5 4l-2.5 2.5 2.5 2.5" fill="none" stroke="#3d9ae0" stroke-width="1.3"/></svg><svg class="r" style="left:465px;top:127px;" width="15" height="14" viewBox="0 0 15 14"><rect x="0" y="0" width="14" height="1.3" fill="#e6e6e6"/><rect x="8" y="4" width="6" height="1.3" fill="#e6e6e6"/><rect x="8" y="8" width="6" height="1.3" fill="#e6e6e6"/><rect x="0" y="12" width="14" height="1.3" fill="#e6e6e6"/><path d="M0.5 6.5H6M3.5 4l2.5 2.5-2.5 2.5" fill="none" stroke="#3d9ae0" stroke-width="1.3"/></svg><div class="r" style="left:521px;top:89px;width:1px;height:62px;background:#4e4e4e;"></div><svg class="r" style="left:533px;top:95px;" width="17" height="16" viewBox="0 0 17 16"><text x="1" y="7" font-size="8.5" fill="#e6e6e6" font-family="Liberation Sans" letter-spacing="0.5">ab</text><text x="1" y="14" font-size="8.5" fill="#e6e6e6" font-family="Liberation Sans">c</text><path d="M14.5 6.5v3.5a2 2 0 0 1-2 2H7M9.5 9.5l-2.5 2.5 2.5 2.5" fill="none" stroke="#3d9ae0" stroke-width="1.3"/></svg><svg class="r" style="left:532px;top:125px;" width="16" height="17" viewBox="0 0 16 17"><rect x="0.6" y="0.6" width="14.8" height="15.8" fill="none" stroke="#ddd" stroke-width="1.1"/><rect x="1.2" y="4.5" width="13.6" height="8" fill="#1a4f78"/><path d="M7.5 1v3.5M7.5 12.5V16M0.6 4.5h14.8M0.6 12.5h14.8" stroke="#ddd" stroke-width="1"/><path d="M3 8.5h10M5 6.5l-2 2 2 2M11 6.5l2 2-2 2" fill="none" stroke="#5fb0ea" stroke-width="1.1"/></svg><svg class="r" style="left:555px;top:133px;" width="7" height="5" viewBox="0 0 7 5"><path d="M0.8 0.8l2.70 2.70 2.70 -2.70" fill="none" stroke="#e6e6e6" stroke-width="1.3"/></svg><div class="t " style="left:453.5px;transform:translateX(-50%);top:163.15px;font-size:11.5px;color:#ececec;font-weight:normal;letter-spacing:0.2px">Alignment</div><svg class="r" style="left:564px;top:164px;" width="9" height="9" viewBox="0 0 9 9"><path d="M0.5 7.5V0.5h7" fill="none" stroke="#ddd" stroke-width="1"/><path d="M3 3l5 5M4.5 8h3.5V4.5" fill="none" stroke="#ddd" stroke-width="1.1"/></svg><div class="r" style="left:584.2px;top:90px;width:146px;height:24px;border:1px solid #6a6a6a;border-radius:5px"></div><div class="t " style="left:587.6px;top:95.89px;font-size:12px;color:#ffffff;font-weight:normal;letter-spacing:-0.3px">General</div><svg class="r" style="left:720px;top:101px;" width="7" height="5" viewBox="0 0 7 5"><path d="M0.8 0.8l2.70 2.70 2.70 -2.70" fill="none" stroke="#e6e6e6" stroke-width="1.3"/></svg><svg class="r" style="left:590px;top:126px;" width="11" height="17" viewBox="0 0 11 17"><path d="M9 4.2C8.3 3 7 2.4 5.5 2.4 3.5 2.4 2 3.5 2 5.2c0 1.8 1.5 2.5 3.5 3.2 2.2 0.8 3.7 1.5 3.7 3.5 0 1.8-1.6 2.9-3.7 2.9-1.7 0-3.2-0.7-4-2M5.5 0.5v16" fill="none" stroke="#e6e6e6" stroke-width="1.2"/></svg><svg class="r" style="left:611px;top:133px;" width="7" height="5" viewBox="0 0 7 5"><path d="M0.8 0.8l2.70 2.70 2.70 -2.70" fill="none" stroke="#e6e6e6" stroke-width="1.3"/></svg><svg class="r" style="left:628.5px;top:127px;" width="17" height="15" viewBox="0 0 17 15"><circle cx="4" cy="3.8" r="3" fill="none" stroke="#e6e6e6" stroke-width="1.2"/><circle cx="12.5" cy="10.8" r="3" fill="none" stroke="#e6e6e6" stroke-width="1.2"/><path d="M14 1L3 14" stroke="#e6e6e6" stroke-width="1.2"/></svg><svg class="r" style="left:658px;top:127px;" width="10" height="15" viewBox="0 0 10 15"><circle cx="5" cy="4" r="3.6" fill="#e6e6e6"/><path d="M7.5 5.5C8 9 6 12 2.5 13.5" fill="none" stroke="#e6e6e6" stroke-width="2"/></svg><div class="r" style="left:677px;top:122px;width:1px;height:24px;background:#4e4e4e;"></div><svg class="r" style="left:683px;top:125px;" width="18" height="17" viewBox="0 0 18 17"><path d="M8.5 4.5H1.5M4.5 1.5l-3 3 3 3" fill="none" stroke="#3d9ae0" stroke-width="1.3"/><text x="10" y="8" font-size="8.5" fill="#e6e6e6" font-family="Liberation Sans">0</text><text x="5" y="16" font-size="8.5" fill="#e6e6e6" font-family="Liberation Sans">.00</text></svg><svg class="r" style="left:709px;top:125px;" width="18" height="17" viewBox="0 0 18 17"><text x="3" y="8" font-size="8.5" fill="#e6e6e6" font-family="Liberation Sans">.00</text><path d="M1 12.5h7M5 9.5l3 3-3 3" fill="none" stroke="#3d9ae0" stroke-width="1.3"/><text x="10" y="16" font-size="8.5" fill="#e6e6e6" font-family="Liberation Sans">0</text></svg><div class="t " style="left:628.8px;top:163.65px;font-size:11.5px;color:#ececec;font-weight:normal;">Number</div><svg class="r" style="left:726px;top:164px;" width="9" height="9" viewBox="0 0 9 9"><path d="M0.5 7.5V0.5h7" fill="none" stroke="#ddd" stroke-width="1"/><path d="M3 3l5 5M4.5 8h3.5V4.5" fill="none" stroke="#ddd" stroke-width="1.1"/></svg><svg class="r" style="left:769px;top:89px;" width="29" height="23" viewBox="0 0 29 23"><rect x="5" y="1" width="12.8" height="6.5" fill="#e02b20"/><rect x="5" y="15" width="15" height="7" fill="#e02b20"/><rect x="5" y="7.5" width="9" height="7.5" fill="#1e78c8"/><path d="M0.6 0.6h27.8v21.8H0.6zM0.6 7.5h27.8M0.6 15h27.8M5 0.6v21.8M22.7 0.6v21.8M17.8 0.6v6.9M14 7.5v7.5M20 15v7.4" fill="none" stroke="#e6e6e6" stroke-width="1.1"/></svg><div class="t " style="left:752.6px;top:122.35px;font-size:11.5px;color:#ffffff;font-weight:normal;letter-spacing:0.25px">Conditional</div><div class="t " style="left:749px;top:138.45px;font-size:11.5px;color:#ffffff;font-weight:normal;letter-spacing:0.2px">Formatting</div><svg class="r" style="left:810px;top:143.5px;" width="6" height="5" viewBox="0 0 6 5"><path d="M0.8 0.8l2.20 2.20 2.20 -2.20" fill="none" stroke="#e6e6e6" stroke-width="1.3"/></svg><svg class="r" style="left:837px;top:89px;" width="32" height="29" viewBox="0 0 32 29"><rect x="9.5" y="8" width="18" height="14" fill="#1e6fc0"/><path d="M9.5 15h18M18.6 8v14" stroke="#6fc0f5" stroke-width="1"/><path d="M0.6 0.6h27.2v21.4H0.6zM0.6 8h9M0.6 15h9M9.5 0.6v21.4M18.6 0.6v7.4M9.5 8h18.3" fill="none" stroke="#e6e6e6" stroke-width="1.1"/><path d="M30.5 8L18 20.5" stroke="#e6e6e6" stroke-width="3.4" stroke-linecap="round"/><path d="M30.5 8L18 20.5" stroke="#292929" stroke-width="1.2" stroke-linecap="round"/><path d="M19 19.5c-1.5-1.8-4.5-1.5-5.5 0.5-1 2-2 4-5 5.5 4 1.2 8.5 0.5 10.5-3z" fill="#2f86d6"/></svg><div class="t " style="left:825.8px;top:122.35px;font-size:11.5px;color:#ffffff;font-weight:normal;letter-spacing:-0.1px">Format as</div><div class="t " style="left:833px;top:138.45px;font-size:11.5px;color:#ffffff;font-weight:normal;letter-spacing:-0.2px">Table</div><svg class="r" style="left:862px;top:143.5px;" width="6" height="5" viewBox="0 0 6 5"><path d="M0.8 0.8l2.20 2.20 2.20 -2.20" fill="none" stroke="#e6e6e6" stroke-width="1.3"/></svg><svg class="r" style="left:891px;top:89px;" width="32" height="29" viewBox="0 0 32 29"><rect x="5.3" y="6" width="17.4" height="11.6" fill="#1e6fc0" stroke="#6fc0f5" stroke-width="1"/><path d="M0.6 0.6h27.2v21.4H0.6zM0.6 6h27.2M0.6 17.6h27.2M5.3 0.6v21.4M22.7 0.6v5.4" fill="none" stroke="#e6e6e6" stroke-width="1.1"/><path d="M29.5 8.5L17 21" stroke="#e6e6e6" stroke-width="3.4" stroke-linecap="round"/><path d="M29.5 8.5L17 21" stroke="#292929" stroke-width="1.2" stroke-linecap="round"/><path d="M18 20c-1.5-1.8-4.5-1.5-5.5 0.5-1 2-2 4-5 5.5 4 1.2 8.5 0.5 10.5-3z" fill="#2f86d6"/></svg><div class="t " style="left:895.4px;top:122.35px;font-size:11.5px;color:#ffffff;font-weight:normal;">Cell</div><div class="t " style="left:884.4px;top:138.45px;font-size:11.5px;color:#ffffff;font-weight:normal;letter-spacing:-0.3px">Styles</div><svg class="r" style="left:917px;top:143.5px;" width="6" height="5" viewBox="0 0 6 5"><path d="M0.8 0.8l2.20 2.20 2.20 -2.20" fill="none" stroke="#e6e6e6" stroke-width="1.3"/></svg><div class="t " style="left:836.5px;transform:translateX(-50%);top:163.85px;font-size:11.5px;color:#ececec;font-weight:normal;">Styles</div><svg class="r" style="left:947.5px;top:86.5px;" width="17" height="15" viewBox="0 0 17 15"><rect x="6" y="5" width="10" height="4.8" fill="#1e78c8"/><path d="M0.6 0.6h15.4v13.6H0.6zM0.6 5h15.4M0.6 9.8h15.4M5.5 0.6v4.4M5.5 9.8v4.4M11 0.6v13.6" fill="none" stroke="#e6e6e6" stroke-width="1.1"/><path d="M10 7.4H1.5M4.3 4.6L1.5 7.4l2.8 2.8" fill="none" stroke="#6fc0f5" stroke-width="1.3"/></svg><div class="t " style="left:968.3px;top:89.05px;font-size:11.5px;color:#ffffff;font-weight:normal;letter-spacing:-0.1px">Insert</div><svg class="r" style="left:1009px;top:93.5px;" width="7" height="5" viewBox="0 0 7 5"><path d="M0.8 0.8l2.70 2.70 2.70 -2.70" fill="none" stroke="#e6e6e6" stroke-width="1.3"/></svg><svg class="r" style="left:947.5px;top:112.5px;" width="17" height="15" viewBox="0 0 17 15"><path d="M0.6 0.6h15.4M0.6 14.2h15.4M0.6 0.6v4.4M0.6 9.8v4.4M16 0.6v4.4M16 9.8v4.4M5.5 0.6v4M11 0.6v4M5.5 10v4.2M11 10v4.2M0.6 5h3.5M0.6 9.8h3.5M12.5 5h3.5M12.5 9.8h3.5" fill="none" stroke="#e6e6e6" stroke-width="1.1"/><rect x="4" y="4.5" width="5.5" height="5.8" fill="#1e78c8" stroke="#6fc0f5" stroke-width="0.8"/><path d="M11.5 5l4.5 4.8M16 5l-4.5 4.8" stroke="#e04a5a" stroke-width="1.2"/></svg><div class="t " style="left:968.3px;top:114.95px;font-size:11.5px;color:#ffffff;font-weight:normal;">Delete</div><svg class="r" style="left:1013px;top:119.5px;" width="7" height="5" viewBox="0 0 7 5"><path d="M0.8 0.8l2.70 2.70 2.70 -2.70" fill="none" stroke="#e6e6e6" stroke-width="1.3"/></svg><svg class="r" style="left:947.5px;top:137.5px;" width="17" height="17" viewBox="0 0 17 17"><path d="M0.6 3h15.4v13.2H0.6zM0.6 7h15.4M0.6 12h15.4M5.5 3v13.2M11 3v13.2" fill="none" stroke="#e6e6e6" stroke-width="1.1"/><rect x="3.8" y="6.5" width="9" height="5.5" fill="#1e78c8" stroke="#6fc0f5" stroke-width="0.8"/><path d="M3.8 0.3v2.4M12.8 0.3v2.4M3.8 1.3h9" stroke="#6fc0f5" stroke-width="1"/></svg><div class="t " style="left:968.3px;top:141.15px;font-size:11.5px;color:#ffffff;font-weight:normal;letter-spacing:0.1px">Format</div><svg class="r" style="left:1009px;top:145.5px;" width="7" height="5" viewBox="0 0 7 5"><path d="M0.8 0.8l2.70 2.70 2.70 -2.70" fill="none" stroke="#e6e6e6" stroke-width="1.3"/></svg><div class="t " style="left:985px;transform:translateX(-50%);top:163.65px;font-size:11.5px;color:#ececec;font-weight:normal;">Cells</div><svg class="r" style="left:1047px;top:86px;" width="14" height="16" viewBox="0 0 14 16"><path d="M12.5 1.5H1.2l6 6.5-6 6.5h11.3" fill="none" stroke="#e6e6e6" stroke-width="1.2"/></svg><svg class="r" style="left:1069px;top:94px;" width="7" height="5" viewBox="0 0 7 5"><path d="M0.8 0.8l2.70 2.70 2.70 -2.70" fill="none" stroke="#e6e6e6" stroke-width="1.3"/></svg><svg class="r" style="left:1045px;top:112px;" width="18" height="16" viewBox="0 0 18 16"><rect x="0.6" y="0.6" width="16" height="14" fill="none" stroke="#ddd" stroke-width="1.1"/><path d="M0.6 3.5h16" stroke="#ddd" stroke-width="1.1"/><path d="M8.6 5.5v7M5.8 9.8l2.8 2.8 2.8-2.8" fill="none" stroke="#3d9ae0" stroke-width="1.3"/></svg><svg class="r" style="left:1067px;top:119px;" width="7" height="5" viewBox="0 0 7 5"><path d="M0.8 0.8l2.70 2.70 2.70 -2.70" fill="none" stroke="#e6e6e6" stroke-width="1.3"/></svg><svg class="r" style="left:1045px;top:137px;" width="17" height="17" viewBox="0 0 17 17"><path d="M1 10.5L10 1.5l6 6-9 9z" fill="none" stroke="#ddd" stroke-width="1.1"/><path d="M1 10.5l3.5-3.5 6 6L7 16.5z" fill="#b84bc4"/></svg><svg class="r" style="left:1067px;top:146px;" width="7" height="5" viewBox="0 0 7 5"><path d="M0.8 0.8l2.70 2.70 2.70 -2.70" fill="none" stroke="#e6e6e6" stroke-width="1.3"/></svg><svg class="r" style="left:1089px;top:86px;" width="32" height="30" viewBox="0 0 32 30"><text x="1" y="13" font-size="14" fill="#3d9ae0" font-family="Liberation Sans">A</text><text x="1.5" y="28" font-size="14" fill="#e6e6e6" font-family="Liberation Sans">Z</text><path d="M13.5 8.5h16l-6 7v8.5h-4v-8.5z" fill="none" stroke="#e6e6e6" stroke-width="1.2"/></svg><div class="t " style="left:1087.8px;top:122.75px;font-size:11.5px;color:#ffffff;font-weight:normal;letter-spacing:0.2px">Sort &amp;</div><div class="t " style="left:1086.4px;top:138.45px;font-size:11.5px;color:#ffffff;font-weight:normal;letter-spacing:0.2px">Filter</div><svg class="r" style="left:1116px;top:143.5px;" width="6" height="5" viewBox="0 0 6 5"><path d="M0.8 0.8l2.20 2.20 2.20 -2.20" fill="none" stroke="#e6e6e6" stroke-width="1.3"/></svg><svg class="r" style="left:1135px;top:86px;" width="32" height="31" viewBox="0 0 32 31"><circle cx="19.3" cy="11.2" r="10.4" fill="none" stroke="#e6e6e6" stroke-width="1.2"/><path d="M12 18.5L1 29" stroke="#e6e6e6" stroke-width="1.2"/></svg><div class="t " style="left:1133.3px;top:122.75px;font-size:11.5px;color:#ffffff;font-weight:normal;letter-spacing:0.1px">Find &amp;</div><div class="t " style="left:1130px;top:138.45px;font-size:11.5px;color:#ffffff;font-weight:normal;">Select</div><svg class="r" style="left:1165px;top:143.5px;" width="6" height="5" viewBox="0 0 6 5"><path d="M0.8 0.8l2.20 2.20 2.20 -2.20" fill="none" stroke="#e6e6e6" stroke-width="1.3"/></svg><div class="t " style="left:1108.5px;transform:translateX(-50%);top:163.65px;font-size:11.5px;color:#ececec;font-weight:normal;">Editing</div><svg class="r" style="left:1199px;top:86px;" width="30" height="30" viewBox="0 0 30 30"><rect x="1" y="1" width="28" height="28" fill="none" stroke="#e8642c" stroke-width="1.3"/><rect x="4.5" y="4.5" width="9" height="9" fill="none" stroke="#e8642c" stroke-width="1.2"/><rect x="16.5" y="4.5" width="9" height="9" fill="none" stroke="#e8642c" stroke-width="1.2"/><rect x="4.5" y="16.5" width="9" height="9" fill="none" stroke="#e8642c" stroke-width="1.2"/><rect x="16.5" y="16.5" width="9" height="9" fill="none" stroke="#e8642c" stroke-width="1.2"/></svg><div class="t " style="left:1213.8px;transform:translateX(-50%);top:122.65px;font-size:11.5px;color:#ffffff;font-weight:normal;letter-spacing:0.3px">Add-ins</div><div class="t " style="left:1214px;transform:translateX(-50%);top:163.15px;font-size:11.5px;color:#ececec;font-weight:normal;letter-spacing:0.3px">Add-ins</div><svg class="r" style="left:1334px;top:164px;" width="13" height="8" viewBox="0 0 13 8"><path d="M1 7l5.5-5.5L12 7" fill="none" stroke="#e6e6e6" stroke-width="1.2"/></svg><svg class="r" style="left:598px;top:620px;" width="170" height="60" viewBox="0 0 170 60"><g fill="#000" opacity="0.105">
<path d="M26 14 C14 13 4 19 3.5 30 C3 41 12 44 22 44 H75 V36 H22 C15 36 11.5 33.5 11.5 29 C11.5 24 16 21.5 26 22.5z"/>
<path d="M39 44 V26 C39 20 43 18 48.5 18 C54 18 60 20 60 26 V44 H52 V27 C52 25.5 50.5 25 48.5 25 C46.5 25 47 25.5 47 27 V44z"/>
<rect x="68" y="2.5" width="7.5" height="41.5"/>
<circle cx="92" cy="8" r="5.5"/>
<path d="M80 20.5 H105 V44 H80 V36 H97 V28 H80z"/>
<rect x="97" y="36" width="30" height="8"/>
<path d="M138 19 C131 19 126 24 126 31 C126 39 131 44 140 44 H152 V36 H148.5 C151 34 152 32 152 30 C152 23.5 146 19 138 19z M139 27 C142 27 144 29 144 31 C144 33 142 34.5 139 34.5 C136 34.5 134 33 134 31 C134 29 136 27 139 27z"/>
<circle cx="137" cy="8" r="5.5"/>
<path d="M158 16 H166 V34 C166 40 162 44 155 44 H148 V36 H155 C157 36 158 35 158 33z"/>
<circle cx="161" cy="8" r="5.5"/>
<circle cx="20.5" cy="53" r="5"/>
<circle cx="32" cy="53" r="4.5"/>
</g></svg><div class="t " style="left:607px;top:676.15px;font-size:28.5px;color:#c8c8c8;font-weight:normal;letter-spacing:0.5px;-webkit-text-stroke:0.4px #c8c8c8">nafezly.com</div>
</body></html>
